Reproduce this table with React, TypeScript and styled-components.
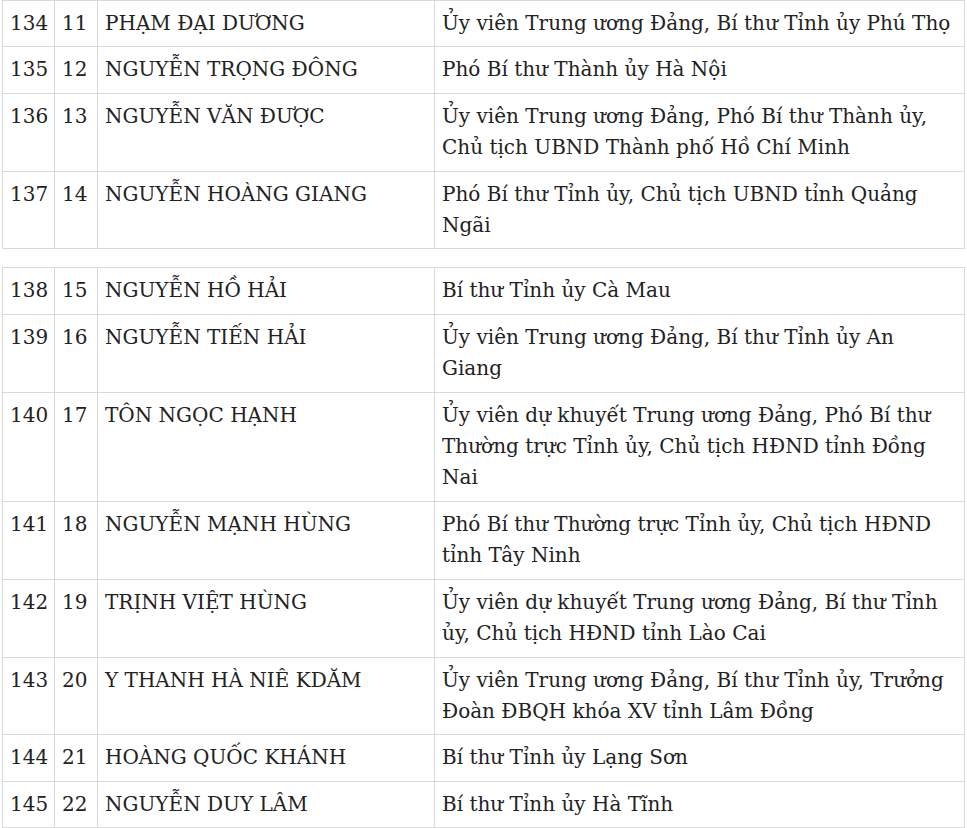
import { createGlobalStyle } from "styled-components";
import styled from "styled-components";

const GlobalStyle = createGlobalStyle`
  html, body {
    margin: 0;
    padding: 0;
    background: #ffffff;
  }
  body {
    padding: 0 0 0 2px;
    font-family: "DejaVu Serif", "Liberation Serif", serif;
    color: #222222;
  }
`;

const Page = styled.div`
  display: flex;
  flex-direction: column;
  gap: 18px;
  width: 962px;
`;

const Table = styled.table`
  width: 962px;
  border-collapse: collapse;
  table-layout: fixed;
`;

const Column = styled.col<{ $w: number }>`
  width: ${(p) => p.$w}px;
`;

const Cell = styled.td`
  box-sizing: border-box;
  border: 1px solid #d9d9d9;
  padding: 7px;
  font-size: 20px;
  line-height: 31.4px;
  vertical-align: top;
  white-space: nowrap;
`;

type Row = { stt: string; no: string; name: string; role: string[] };

const first: Row[] = [
  { stt: "134", no: "11", name: "PHẠM ĐẠI DƯƠNG", role: ["Ủy viên Trung ương Đảng, Bí thư Tỉnh ủy Phú Thọ"] },
  { stt: "135", no: "12", name: "NGUYỄN TRỌNG ĐÔNG", role: ["Phó Bí thư Thành ủy Hà Nội"] },
  { stt: "136", no: "13", name: "NGUYỄN VĂN ĐƯỢC", role: ["Ủy viên Trung ương Đảng, Phó Bí thư Thành ủy,", "Chủ tịch UBND Thành phố Hồ Chí Minh"] },
  { stt: "137", no: "14", name: "NGUYỄN HOÀNG GIANG", role: ["Phó Bí thư Tỉnh ủy, Chủ tịch UBND tỉnh Quảng", "Ngãi"] },
];

const second: Row[] = [
  { stt: "138", no: "15", name: "NGUYỄN HỒ HẢI", role: ["Bí thư Tỉnh ủy Cà Mau"] },
  { stt: "139", no: "16", name: "NGUYỄN TIẾN HẢI", role: ["Ủy viên Trung ương Đảng, Bí thư Tỉnh ủy An", "Giang"] },
  { stt: "140", no: "17", name: "TÔN NGỌC HẠNH", role: ["Ủy viên dự khuyết Trung ương Đảng, Phó Bí thư", "Thường trực Tỉnh ủy, Chủ tịch HĐND tỉnh Đồng", "Nai"] },
  { stt: "141", no: "18", name: "NGUYỄN MẠNH HÙNG", role: ["Phó Bí thư Thường trực Tỉnh ủy, Chủ tịch HĐND", "tỉnh Tây Ninh"] },
  { stt: "142", no: "19", name: "TRỊNH VIỆT HÙNG", role: ["Ủy viên dự khuyết Trung ương Đảng, Bí thư Tỉnh", "ủy, Chủ tịch HĐND tỉnh Lào Cai"] },
  { stt: "143", no: "20", name: "Y THANH HÀ NIÊ KDĂM", role: ["Ủy viên Trung ương Đảng, Bí thư Tỉnh ủy, Trưởng", "Đoàn ĐBQH khóa XV tỉnh Lâm Đồng"] },
  { stt: "144", no: "21", name: "HOÀNG QUỐC KHÁNH", role: ["Bí thư Tỉnh ủy Lạng Sơn"] },
  { stt: "145", no: "22", name: "NGUYỄN DUY LÂM", role: ["Bí thư Tỉnh ủy Hà Tĩnh"] },
];

const Roster = ({ rows }: { rows: Row[] }) => (
  <Table>
    <colgroup>
      <Column $w={52} />
      <Column $w={43} />
      <Column $w={337} />
      <Column $w={530} />
    </colgroup>
    <tbody>
      {rows.map((r) => (
        <tr key={r.stt}>
          <Cell>{r.stt}</Cell>
          <Cell>{r.no}</Cell>
          <Cell>{r.name}</Cell>
          <Cell>
            {r.role.map((line, i) => (
              <span key={i}>
                {i > 0 && <br />}
                {line}
              </span>
            ))}
          </Cell>
        </tr>
      ))}
    </tbody>
  </Table>
);

export default function App() {
  return (
    <>
      <GlobalStyle />
      <Page>
        <Roster rows={first} />
        <Roster rows={second} />
      </Page>
    </>
  );
}
